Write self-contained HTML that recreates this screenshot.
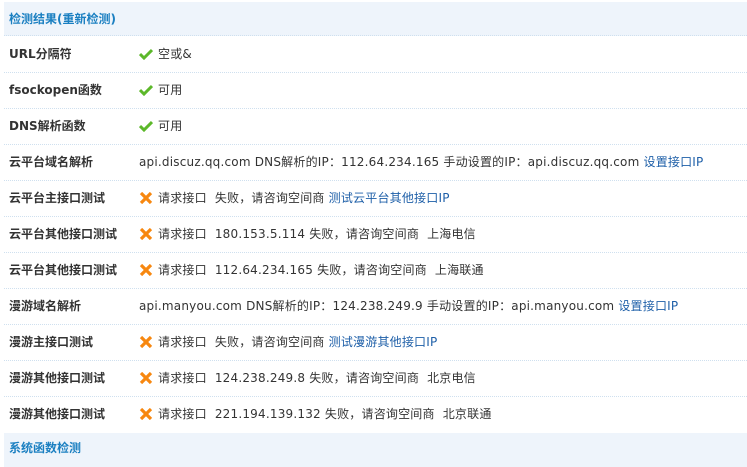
<!DOCTYPE html>
<html><head><meta charset="utf-8"><style>
body{margin:0;background:#fff;font:12px "DejaVu Sans","Noto Sans CJK SC",sans-serif;color:#333;width:747px;height:451px;overflow:hidden;position:relative}
.h{position:absolute;left:4px;width:743px;height:34px;background:#eef4fb;color:#1a7fc1;font-weight:bold;font-size:12px;line-height:34px;padding-left:5px;box-sizing:border-box;border-bottom:1px dotted #cfe0ef}
.r{position:absolute;left:4px;width:743px;height:36px;border-bottom:1px dotted #cfe0ef;box-sizing:border-box;line-height:35px}
.l{position:absolute;left:5px;font-weight:bold;color:#333}
.v{position:absolute;left:135px;white-space:nowrap;letter-spacing:0.2px}
.i{display:inline-block;width:14px;margin-right:5px;vertical-align:-2px}
a{color:#1e5fa8;text-decoration:none}
</style></head><body>
<div class="h" style="top:2px">检测结果(重新检测)</div>
<div class="r" style="top:37px"><span class="l">URL分隔符</span><span class="v"><svg class="i" width="14" height="12" viewBox="0 0 14 12"><path d="M1 6 L5 10 L13 2" stroke="#5cb82a" stroke-width="3" fill="none"/></svg>空或&amp;</span></div>
<div class="r" style="top:73px"><span class="l">fsockopen函数</span><span class="v"><svg class="i" width="14" height="12" viewBox="0 0 14 12"><path d="M1 6 L5 10 L13 2" stroke="#5cb82a" stroke-width="3" fill="none"/></svg>可用</span></div>
<div class="r" style="top:109px"><span class="l">DNS解析函数</span><span class="v"><svg class="i" width="14" height="12" viewBox="0 0 14 12"><path d="M1 6 L5 10 L13 2" stroke="#5cb82a" stroke-width="3" fill="none"/></svg>可用</span></div>
<div class="r" style="top:145px"><span class="l">云平台域名解析</span><span class="v">api.discuz.qq.com DNS解析的IP：112.64.234.165 手动设置的IP：api.discuz.qq.com <a>设置接口IP</a></span></div>
<div class="r" style="top:181px"><span class="l">云平台主接口测试</span><span class="v"><svg class="i" width="14" height="12" viewBox="0 0 14 12"><path d="M2 1 L12 11 M12 1 L2 11" stroke="#f7870f" stroke-width="3.2"/></svg>请求接口 &nbsp;失败，请咨询空间商 <a>测试云平台其他接口IP</a></span></div>
<div class="r" style="top:217px"><span class="l">云平台其他接口测试</span><span class="v"><svg class="i" width="14" height="12" viewBox="0 0 14 12"><path d="M2 1 L12 11 M12 1 L2 11" stroke="#f7870f" stroke-width="3.2"/></svg>请求接口 &nbsp;180.153.5.114 失败，请咨询空间商 &nbsp;上海电信</span></div>
<div class="r" style="top:253px"><span class="l">云平台其他接口测试</span><span class="v"><svg class="i" width="14" height="12" viewBox="0 0 14 12"><path d="M2 1 L12 11 M12 1 L2 11" stroke="#f7870f" stroke-width="3.2"/></svg>请求接口 &nbsp;112.64.234.165 失败，请咨询空间商 &nbsp;上海联通</span></div>
<div class="r" style="top:289px"><span class="l">漫游域名解析</span><span class="v">api.manyou.com DNS解析的IP：124.238.249.9 手动设置的IP：api.manyou.com <a>设置接口IP</a></span></div>
<div class="r" style="top:325px"><span class="l">漫游主接口测试</span><span class="v"><svg class="i" width="14" height="12" viewBox="0 0 14 12"><path d="M2 1 L12 11 M12 1 L2 11" stroke="#f7870f" stroke-width="3.2"/></svg>请求接口 &nbsp;失败，请咨询空间商 <a>测试漫游其他接口IP</a></span></div>
<div class="r" style="top:361px"><span class="l">漫游其他接口测试</span><span class="v"><svg class="i" width="14" height="12" viewBox="0 0 14 12"><path d="M2 1 L12 11 M12 1 L2 11" stroke="#f7870f" stroke-width="3.2"/></svg>请求接口 &nbsp;124.238.249.8 失败，请咨询空间商 &nbsp;北京电信</span></div>
<div class="r" style="top:397px;border-bottom:none"><span class="l">漫游其他接口测试</span><span class="v"><svg class="i" width="14" height="12" viewBox="0 0 14 12"><path d="M2 1 L12 11 M12 1 L2 11" stroke="#f7870f" stroke-width="3.2"/></svg>请求接口 &nbsp;221.194.139.132 失败，请咨询空间商 &nbsp;北京联通</span></div>
<div class="h" style="top:433px;border:none;line-height:30px">系统函数检测</div>
</body></html>
